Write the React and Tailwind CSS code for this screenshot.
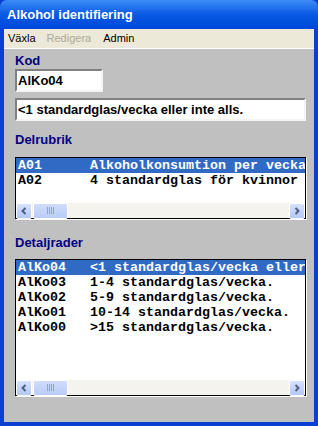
import React from 'react';

const sans = { fontFamily: '"Liberation Sans", Arial, sans-serif' };
const mono = { fontFamily: '"Liberation Mono", "Courier New", monospace' };

const ScrollButton = ({ dir }) => (
  <div className="w-[16px] h-[16px] rounded-[2px] border border-white bg-gradient-to-b from-[#d6e2fd] to-[#b4c8f6] flex items-center justify-center">
    <svg width="8" height="8" viewBox="0 0 8 8">
      {dir === 'left' ? (
        <path d="M5.5 1 L2.5 4 L5.5 7" stroke="#4d6185" strokeWidth="2" fill="none" />
      ) : (
        <path d="M2.5 1 L5.5 4 L2.5 7" stroke="#4d6185" strokeWidth="2" fill="none" />
      )}
    </svg>
  </div>
);

const HScrollbar = () => (
  <div className="h-[16px] flex items-center bg-[#f4f3ee] border-t border-[#fdfdfb]">
    <ScrollButton dir="left" />
    <div className="ml-[1px] w-[35px] h-[16px] rounded-[2px] border border-white bg-gradient-to-b from-[#d0dcfb] to-[#b9cbf7] flex items-center justify-center gap-[1px]">
      {[0, 1, 2, 3].map(i => (
        <div key={i} className="w-[1px] h-[7px] bg-[#eef3fe] border-r border-[#8ca4dc]" />
      ))}
    </div>
    <div className="flex-1" />
    <ScrollButton dir="right" />
  </div>
);

const ListBox = ({ rows, height }) => (
  <div className="w-[291px] border border-black bg-white shadow-[1px_1px_0_#ffffff] flex flex-col" style={{ height }}>
    <div className="flex-1 overflow-hidden">
      {rows.map((r, i) => (
        <div
          key={i}
          className={`h-[15px] leading-[15px] pl-[2px] whitespace-pre overflow-hidden text-[13.33px] font-bold ${i === 0 ? 'bg-[#316ac5] text-white' : 'text-black'}`}
          style={mono}
        >
          {r}
        </div>
      ))}
    </div>
    <HScrollbar />
  </div>
);

const Label = ({ children, className }) => (
  <div className={`text-[13px] leading-[16px] font-bold text-[#000080] ${className}`} style={sans}>
    {children}
  </div>
);

const Field = ({ value, width, className }) => (
  <div
    className={`h-[23px] bg-white border-2 border-t-[#808080] border-l-[#808080] border-b-[#f4f4f4] border-r-[#f4f4f4] flex items-center pl-[1px] text-[13px] font-bold text-black whitespace-pre overflow-hidden ${className}`}
    style={{ ...sans, width }}
  >
    {value}
  </div>
);

export default function App() {
  return (
    <div className="w-[318px] h-[426px] flex flex-col bg-[#0a3fd4]" style={sans}>
      <div className="h-[29px] rounded-t-[7px] bg-gradient-to-b from-[#3d8cf7] via-[#0859e4] to-[#0048d8] flex items-center pl-[7px]">
        <span className="text-white font-bold text-[13px]">Alkohol identifiering</span>
      </div>
      <div className="flex-1 flex flex-col px-[4px] pb-[4px]">
        <div className="h-[20px] bg-[#ece9d8] border-b border-white flex items-center text-[11px] text-black">
          <span className="ml-[4px]">Växla</span>
          <span className="ml-[11px] text-[#aca899]">Redigera</span>
          <span className="ml-[12px]">Admin</span>
        </div>
        <div className="flex-1 bg-[#c0c0c0] pl-[11px] pt-[4px] flex flex-col">
          <Label>Kod</Label>
          <Field value="AlKo04" width="88px" />
          <Field value="<1 standardglas/vecka eller inte alls." width="291px" className="mt-[6px]" />
          <Label className="mt-[11px]">Delrubrik</Label>
          <div className="mt-[9px]">
            <ListBox
              height={62}
              rows={['A01      Alkoholkonsumtion per vecka', 'A02      4 standardglas för kvinnor']}
            />
          </div>
          <Label className="mt-[16px]">Detaljrader</Label>
          <div className="mt-[8px]">
            <ListBox
              height={137}
              rows={[
                'AlKo04   <1 standardglas/vecka eller',
                'AlKo03   1-4 standardglas/vecka.',
                'AlKo02   5-9 standardglas/vecka.',
                'AlKo01   10-14 standardglas/vecka.',
                'AlKo00   >15 standardglas/vecka.',
              ]}
            />
          </div>
        </div>
      </div>
    </div>
  );
}
